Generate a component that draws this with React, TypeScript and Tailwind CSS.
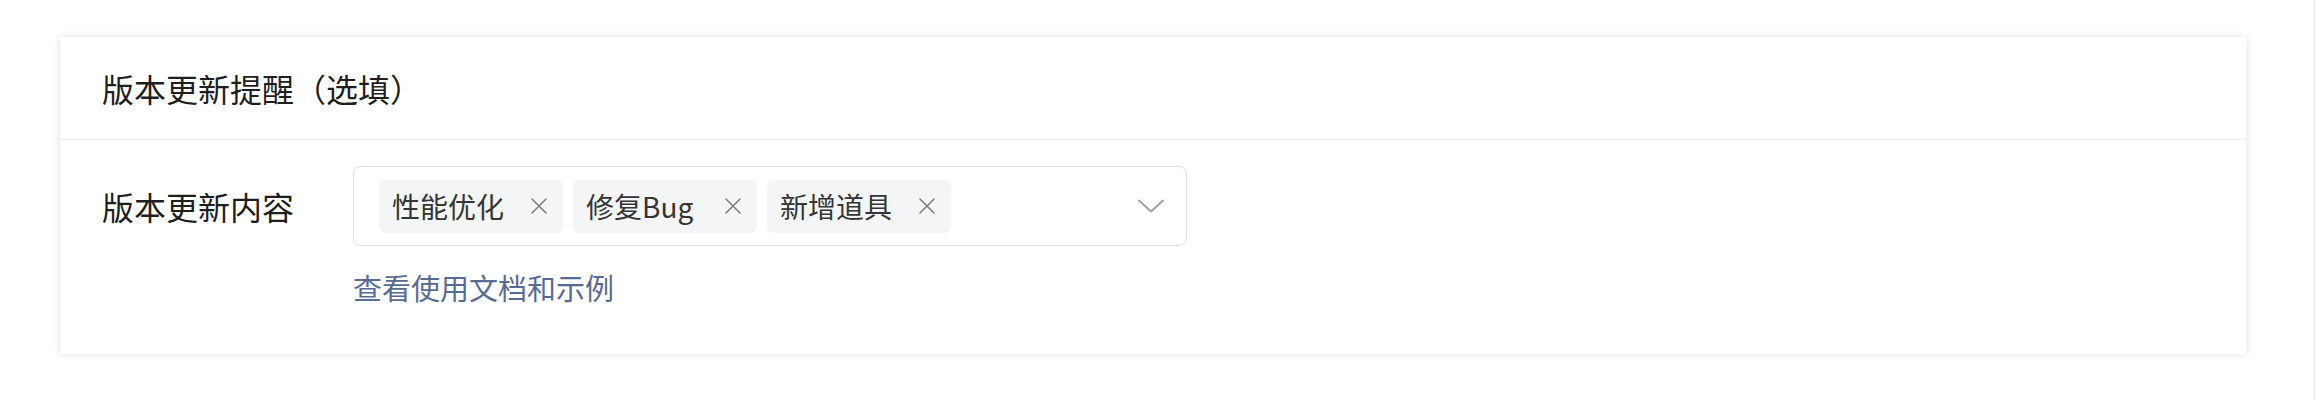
import React from "react";

const TAGS = ["性能优化", "修复Bug", "新增道具"];

function CloseIcon() {
  return (
    <svg width="18" height="18" viewBox="0 0 18 18" fill="none" className="shrink-0">
      <path d="M2 2L16 16M16 2L2 16" stroke="#7b7b7b" strokeWidth="1.5" strokeLinecap="round" />
    </svg>
  );
}

function Chevron() {
  return (
    <svg width="26" height="14" viewBox="0 0 26 14" fill="none" className="shrink-0">
      <path d="M1 1.5L13 12.5L25 1.5" stroke="#a3a3a3" strokeWidth="2" strokeLinecap="round" strokeLinejoin="round" />
    </svg>
  );
}

export default function App() {
  return (
    <div className="flex h-[400px] w-full bg-white font-['PingFang_SC','Noto_Sans_CJK_SC',sans-serif]">
      <div className="flex-1 pl-[60px] pr-[68px] pt-[37px]">
        <section className="h-[317px] bg-white shadow-[0_0_8px_rgba(0,0,0,0.13)]">
          {/* Header */}
          <header className="flex h-[103px] items-center border-b border-[#ececec] pl-[42px] text-[32px] text-black/90">
            版本更新提醒（选填）
          </header>

          {/* Body */}
          <div className="flex pl-[42px] pt-[26px]">
            <div className="flex h-[80px] w-[251px] items-center text-[32px] text-black/90">版本更新内容</div>
            <div className="flex flex-col">
              <div className="flex h-[80px] w-[834px] items-center justify-between rounded-[8px] border border-[#dfdfdf] pl-[25px] pr-[22px]">
                <div className="flex gap-[10px]">
                  {TAGS.map((t) => (
                    <span
                      key={t}
                      className="flex h-[53px] w-[184px] items-center justify-between rounded-[6px] bg-[#f4f5f7] pl-[13px] pr-[15px] text-[28px] text-[#353535]"
                    >
                      {t}
                      <CloseIcon />
                    </span>
                  ))}
                </div>
                <Chevron />
              </div>
              <a className="mt-[21px] block h-[40px] text-[29px] leading-[40px] text-[#576b95]">查看使用文档和示例</a>
            </div>
          </div>
        </section>
      </div>
      <div className="w-[1px] bg-[#e8e8e8]" />
      <div className="w-[1px]" />
    </div>
  );
}
